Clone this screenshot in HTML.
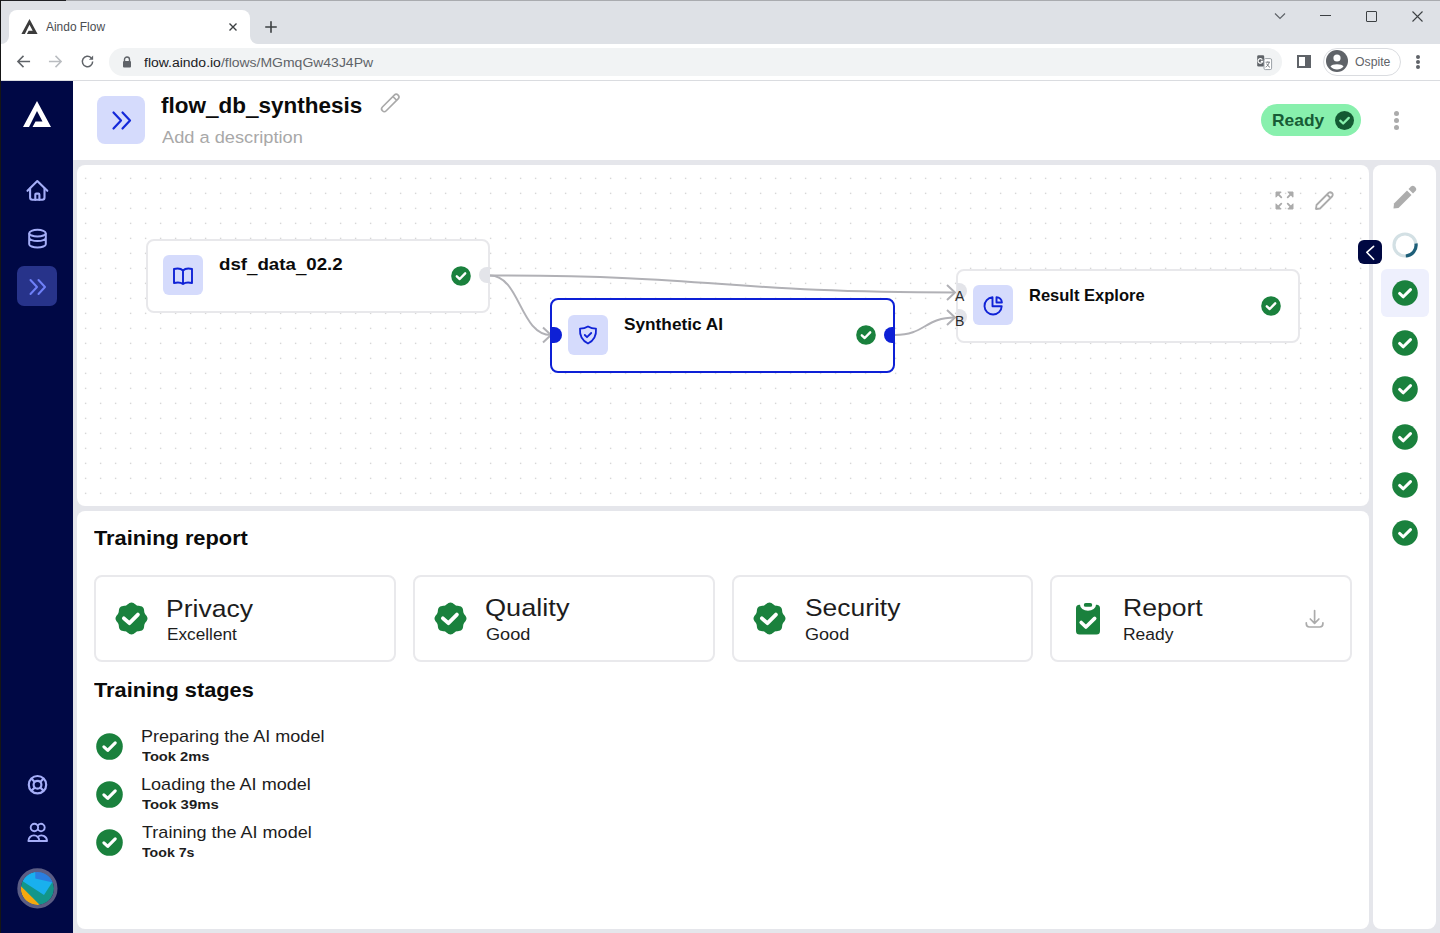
<!DOCTYPE html>
<html><head><meta charset="utf-8">
<style>
*{box-sizing:border-box;margin:0;padding:0}
html,body{width:1440px;height:933px;overflow:hidden;background:#e5e6eb;font-family:"Liberation Sans",sans-serif}
.a{position:absolute}
.t{position:absolute;white-space:nowrap;line-height:1;transform-origin:0 0}
svg{position:absolute;overflow:visible}
.u{display:inline-block;transform-origin:50% 90%;transform:translateY(0.08em) scaleY(2.2)}
</style></head><body>
<!-- browser chrome -->
<div class="a" style="left:0;top:0;width:1440px;height:44px;background:#dee1e6"></div>
<div class="a" style="left:0;top:0;width:66px;height:1px;background:#202124"></div>
<div class="a" style="left:66px;top:0;width:1374px;height:1px;background:#a9abaf"></div>
<div class="a" style="left:0;top:0;width:1px;height:933px;background:#151515"></div>
<!-- tab -->
<div class="a" style="left:9px;top:10px;width:241px;height:40px;background:#fff;border-radius:8px 8px 0 0"></div>
<div class="a" style="left:1px;top:36px;width:8px;height:8px;background:#fff"></div>
<div class="a" style="left:1px;top:28px;width:8px;height:16px;background:#dee1e6;border-bottom-right-radius:8px"></div>
<div class="a" style="left:250px;top:36px;width:8px;height:8px;background:#fff"></div>
<div class="a" style="left:250px;top:28px;width:8px;height:16px;background:#dee1e6;border-bottom-left-radius:8px"></div>
<svg style="left:21px;top:19px" width="17" height="15" viewBox="0 0 28 26"><path d="M0 26 L14 0 L28 26 L9.5 26 L12.5 20.5 L19.5 20.5 L14 10 L6 26 Z" fill="#3c3c3c"/></svg>
<div class="t" id="tabtitle" style="left:45.60px;top:20.50px;font-size:12.65px;color:#4a4d51;transform:scaleX(0.944)">Aindo Flow</div>
<svg style="left:229px;top:23px" width="8" height="8" viewBox="0 0 8 8"><path d="M0.5 0.5L7.5 7.5M7.5 0.5L0.5 7.5" stroke="#3c4043" stroke-width="1.4"/></svg>
<svg style="left:265px;top:20.5px" width="12" height="12" viewBox="0 0 12 12"><path d="M6 0.8V11.2M0.8 6H11.2" stroke="#3c4043" stroke-width="1.6" stroke-linecap="round"/></svg>
<!-- window controls -->
<svg style="left:1274px;top:12px" width="12" height="8" viewBox="0 0 12 8"><path d="M1 1.5L6 6.5L11 1.5" stroke="#5f6368" stroke-width="1.2" fill="none"/></svg>
<div class="a" style="left:1320px;top:15px;width:11px;height:1px;background:#3c4043"></div>
<div class="a" style="left:1366px;top:11px;width:11px;height:11px;border:1px solid #3c4043;border-radius:1px"></div>
<svg style="left:1412px;top:11px" width="11" height="11" viewBox="0 0 11 11"><path d="M0.5 0.5L10.5 10.5M10.5 0.5L0.5 10.5" stroke="#3c4043" stroke-width="1.1"/></svg>
<!-- address row -->
<div class="a" style="left:1px;top:44px;width:1439px;height:36px;background:#fff"></div>
<div class="a" style="left:1px;top:80px;width:1439px;height:1px;background:#dadce0"></div>
<svg style="left:16px;top:54px" width="15" height="15" viewBox="0 0 16 16"><path d="M15 8H2M8 2L2 8L8 14" stroke="#5f6368" stroke-width="1.6" fill="none"/></svg>
<svg style="left:48px;top:54px" width="15" height="15" viewBox="0 0 16 16"><path d="M1 8H14M8 2L14 8L8 14" stroke="#b9bcc0" stroke-width="1.6" fill="none"/></svg>
<svg style="left:80px;top:54px" width="15" height="15" viewBox="0 0 16 16"><path d="M13.5 8A5.5 5.5 0 1 1 11.9 4.1" stroke="#5f6368" stroke-width="1.6" fill="none"/><path d="M14 1.5V6H9.5Z" fill="#5f6368"/></svg>
<div class="a" style="left:109px;top:48px;width:1173px;height:28px;background:#f1f3f4;border-radius:14px"></div>
<svg style="left:122px;top:56px" width="10" height="12" viewBox="0 0 10 12"><path d="M2.5 5V3.5A2.5 2.5 0 0 1 7.5 3.5V5" stroke="#5f6368" stroke-width="1.4" fill="none"/><rect x="1" y="5" width="8" height="6.5" rx="1" fill="#5f6368"/></svg>
<div class="t" id="url" style="left:143.86px;top:56.08px;font-size:13.49px;color:#202124;transform:scaleX(1.036)">flow.aindo.io<span style="color:#5f6368">/flows/MGmqGw43J4Pw</span></div>
<!-- translate icon -->
<svg style="left:1256px;top:54px" width="17" height="17" viewBox="0 0 17 17"><rect x="1.2" y="1.2" width="7" height="11.4" rx="1.3" fill="#5f6368"/><rect x="8" y="4.6" width="7.6" height="11" rx="1.4" fill="#fff" stroke="#9aa0a6" stroke-width="1"/><path d="M6.3 5.6A2.3 2.3 0 1 0 6.6 7.4H4.8" stroke="#fff" stroke-width="1.2" fill="none"/><path d="M9.6 8.2H14M11.8 7.4V8.2M13.2 8.3C12.6 10.5 11.3 12.2 9.6 13.2M10.6 9.6C11.4 11.3 12.5 12.6 14 13.4" stroke="#70757a" stroke-width="0.9" fill="none"/></svg>
<!-- sidebar toggle -->
<div class="a" style="left:1297px;top:55px;width:14px;height:13px;border:2px solid #5f6368;border-right-width:6px"></div>
<!-- profile -->
<div class="a" style="left:1323px;top:48px;width:78px;height:28px;border:1px solid #dadce0;border-radius:14px"></div>
<svg style="left:1326px;top:50px" width="22" height="22" viewBox="0 0 22 22"><circle cx="11" cy="11" r="11" fill="#5f6368"/><circle cx="11" cy="8" r="3.6" fill="#fff"/><path d="M4.5 16.5C6 13.5 16 13.5 17.5 16.5C16 18.5 13.5 19.5 11 19.5C8.5 19.5 6 18.5 4.5 16.5Z" fill="#fff"/></svg>
<div class="t" id="ospite" style="left:1354.79px;top:55.57px;font-size:12.79px;color:#5f6368;transform:scaleX(0.958)">Ospite</div>
<div class="a" style="left:1416px;top:55px;width:4px;height:4px;border-radius:2px;background:#5f6368"></div>
<div class="a" style="left:1416px;top:60px;width:4px;height:4px;border-radius:2px;background:#5f6368"></div>
<div class="a" style="left:1416px;top:65px;width:4px;height:4px;border-radius:2px;background:#5f6368"></div>

<!-- app sidebar -->
<div class="a" style="left:1px;top:81px;width:72px;height:852px;background:#000845"></div>
<svg style="left:23px;top:101px" width="28" height="26" viewBox="0 0 28 26"><path d="M0 26 L14 0 L28 26 L9.5 26 L12.5 20.5 L19.5 20.5 L14 10 L6 26 Z" fill="#fff"/></svg>

<!-- sidebar icons -->
<svg style="left:22px;top:175px" width="30" height="30" viewBox="0 0 30 30"><g stroke="#a5aef8" stroke-width="2.1" fill="none" stroke-linecap="round" stroke-linejoin="round"><path d="M5.5 15.8L15.3 6.1L25.3 15.8"/><path d="M8.1 13.6V22.6Q8.1 24.8 10.3 24.8H20.3Q22.5 24.8 22.5 22.6V13.6"/><path d="M13.3 24.8V19.6Q13.3 18.6 14.3 18.6H16.4Q17.4 18.6 17.4 19.6V24.8"/></g></svg>
<svg style="left:28px;top:228px" width="19" height="21" viewBox="0 0 19 21"><g stroke="#a5aef8" stroke-width="2" fill="none"><ellipse cx="9.5" cy="5.15" rx="8.3" ry="3.3"/><path d="M1.2 5.15V16.2A8.3 3.3 0 0 0 17.8 16.2V5.15M1.2 9.8A8.3 3.3 0 0 0 17.8 9.8"/></g></svg>
<div class="a" style="left:17px;top:266px;width:40px;height:40px;border-radius:7px;background:#27338a"></div>
<svg style="left:29px;top:279px" width="18" height="16" viewBox="0 0 18 16"><path d="M1.5 1L8 8L1.5 15M9.5 1L16 8L9.5 15" stroke="#6f80f8" stroke-width="2" fill="none" stroke-linecap="round" stroke-linejoin="round"/></svg>
<svg style="left:27px;top:774px" width="21" height="21" viewBox="0 0 21 21"><g stroke="#a5aef8" stroke-width="2.2" fill="none"><circle cx="10.5" cy="10.7" r="8.7"/><circle cx="10.5" cy="10.7" r="3.9"/><path d="M7.74 7.94L4.35 4.55M13.26 7.94L16.65 4.55M7.74 13.46L4.35 16.85M13.26 13.46L16.65 16.85"/></g></svg>
<svg style="left:24px;top:818px" width="27" height="27" viewBox="0 0 27 27"><g stroke="#a5aef8" stroke-width="1.9" fill="none" stroke-linejoin="round"><circle cx="10.4" cy="9.5" r="3.7"/><path d="M13.7 7.83A3.7 3.7 0 1 1 13.7 11.17"/><path d="M4.4 23A5.5 5.6 0 0 1 15.4 23Z"/><path d="M13.7 19A5.5 5.5 0 0 1 23 23H15.4"/></g></svg>
<svg style="left:15px;top:866px" width="45" height="45" viewBox="0 0 45 45"><defs><clipPath id="av"><circle cx="22.4" cy="22.4" r="16.6"/></clipPath></defs><g clip-path="url(#av)"><rect width="45" height="45" fill="#12968a"/><path d="M0 0H45V4L29 29L0 10.4Z" fill="#19b0ee"/><path d="M20.3 0V12.6L45 18.2V0Z" fill="#2a7ee0"/><path d="M0 14.4L31 45H0Z" fill="#f5a80e"/><path d="M45 30L33.5 42L45 45Z" fill="#4fa24d"/></g><circle cx="22.4" cy="22.4" r="18.3" stroke="#5b5d84" stroke-width="3.6" fill="none"/></svg>

<!-- header -->
<div class="a" style="left:73px;top:81px;width:1367px;height:79px;background:#fff"></div>
<div class="a" style="left:97px;top:96px;width:48px;height:48px;border-radius:8px;background:#d5dbfc"></div>
<svg style="left:112px;top:111px" width="20" height="19" viewBox="0 0 20 19"><path d="M1.5 1.5L9 9.5L1.5 17.5M10.5 1.5L18 9.5L10.5 17.5" stroke="#1429d9" stroke-width="2.2" fill="none" stroke-linecap="round" stroke-linejoin="round"/></svg>
<div class="t" id="title" style="left:161.45px;top:95.44px;font-size:22.16px;font-weight:bold;color:#0b0b0b;transform:scaleX(1.015)">flow<span class="u">_</span>db<span class="u">_</span>synthesis</div>
<svg style="left:372px;top:88px" width="36" height="30" viewBox="0 0 36 30"><g transform="translate(0.6 -0.6) rotate(-45 17.6 15.6)" stroke="#a9a9a9" stroke-width="1.6" fill="none"><rect x="6.6" y="12.9" width="22.2" height="5.4" rx="2.7"/><path d="M24.1 12.9V18.3"/></g></svg>
<div class="t" id="desc" style="left:162.20px;top:129.11px;font-size:16.30px;color:#a8a8a8;transform:scaleX(1.120)">Add a description</div>
<div class="a" style="left:1261px;top:104px;width:100px;height:32px;border-radius:16px;background:#88f0ad"></div>
<div class="t" id="ready" style="left:1271.78px;top:113.47px;font-size:15.99px;font-weight:bold;color:#175c36;transform:scaleX(1.088)">Ready</div>
<svg style="left:1335px;top:111px" width="19" height="19" viewBox="0 0 20 20"><circle cx="10" cy="10" r="10" fill="#145a33"/><path d="M5.5 10.2L8.6 13.2L14.5 7.2" stroke="#88f0ad" stroke-width="2.4" fill="none" stroke-linecap="round" stroke-linejoin="round"/></svg>
<div class="a" style="left:1394px;top:111px;width:5px;height:5px;border-radius:3px;background:#ababab"></div>
<div class="a" style="left:1394px;top:118px;width:5px;height:5px;border-radius:3px;background:#ababab"></div>
<div class="a" style="left:1394px;top:125px;width:5px;height:5px;border-radius:3px;background:#ababab"></div>

<!-- canvas -->
<div class="a" style="left:77px;top:165px;width:1292px;height:341px;background:#fff;border-radius:8px;background-image:radial-gradient(circle,#c4c4c4 0.6px,transparent 1.05px);background-size:15px 15px;background-position:1.2px 5.8px"></div>
<!-- canvas controls -->
<svg style="left:1275px;top:191px" width="19" height="19" viewBox="0 0 19 19"><g fill="#ababab" stroke="#ababab" stroke-width="1" stroke-linejoin="round"><path d="M1 1H6.2L1 6.2Z"/><path d="M18 1H12.8L18 6.2Z"/><path d="M1 18H6.2L1 12.8Z"/><path d="M18 18H12.8L18 12.8Z"/></g><g stroke="#ababab" stroke-width="1.8" stroke-linecap="round"><path d="M3 3L6.3 6.3M16 3L12.7 6.3M3 16L6.3 12.7M16 16L12.7 12.7"/></g></svg>
<svg style="left:1314px;top:190px" width="21" height="21" viewBox="0 0 21 21"><path d="M2 19L2.5 15L14.5 3C15.5 2 17 2 18 3C19 4 19 5.5 18 6.5L6 18.5Z M13 4.5L16.5 8" stroke="#ababab" stroke-width="1.8" fill="none" stroke-linejoin="round"/></svg>

<!-- edges -->
<svg style="left:0;top:0" width="1440" height="933" viewBox="0 0 1440 933">
<g stroke="#b1b1b6" stroke-width="2" fill="none">
<path d="M490 275.5 C722 275.5 722 292.5 955 292.5"/>
<path d="M490 275.5 C520 275.5 520 335 551 335"/>
<path d="M895 335 C925 335 925 317.5 955 317.5"/>
<path d="M947 285 L955 292.5 L947 300"/>
<path d="M543 327.5 L551 335 L543 342.5"/>
<path d="M947 310 L955 317.5 L947 325"/>
</g></svg>

<!-- node 1 -->
<div class="a" style="left:146px;top:239px;width:344px;height:74px;border:2px solid #e8e8eb;border-radius:8px;background:#fff"></div>
<div class="a" style="left:479px;top:267px;width:11px;height:16px;border-radius:8px 0 0 8px;background:#e3e4e9"></div>
<div class="a" style="left:163px;top:255px;width:40px;height:40px;border-radius:6px;background:#d5dbfc"></div>
<svg style="left:173px;top:267px" width="20" height="18" viewBox="0 0 20 18"><path d="M10 3.5C8 1.5 4.5 1.2 1 2V16C4.5 15.2 8 15.5 10 17C12 15.5 15.5 15.2 19 16V2C15.5 1.2 12 1.5 10 3.5ZM10 3.5V17" stroke="#0f22d6" stroke-width="1.9" fill="none" stroke-linejoin="round"/></svg>
<div class="t" id="n1" style="left:218.85px;top:256.20px;font-size:16.30px;font-weight:bold;color:#0b0b0b;transform:scaleX(1.148)">dsf<span class="u">_</span>data<span class="u">_</span>02.2</div>
<svg style="left:451px;top:265.5px" width="20" height="20" viewBox="0 0 20 20"><circle cx="10" cy="10" r="9.8" fill="#1a813d"/><path d="M5.8 10.3L8.7 13L14.2 7.3" stroke="#fff" stroke-width="2.4" fill="none" stroke-linecap="round" stroke-linejoin="round"/></svg>

<!-- node 2 -->
<div class="a" style="left:550px;top:298px;width:345px;height:75px;border:2px solid #0d20d6;border-radius:8px;background:#fff"></div>
<div class="a" style="left:551px;top:327px;width:11px;height:16px;border-radius:0 8px 8px 0;background:#0d20d6"></div>
<div class="a" style="left:884px;top:327px;width:11px;height:16px;border-radius:8px 0 0 8px;background:#0d20d6"></div>
<div class="a" style="left:568px;top:315px;width:40px;height:40px;border-radius:6px;background:#d5dbfc"></div>
<svg style="left:578px;top:325px" width="20" height="20" viewBox="0 0 20 20"><path d="M10 1.5C12.5 3 15 3.6 18 3.6C18.5 10 16 15.5 10 18.5C4 15.5 1.5 10 2 3.6C5 3.6 7.5 3 10 1.5Z" stroke="#0f22d6" stroke-width="1.8" fill="none" stroke-linejoin="round"/><path d="M6.8 10L9 12.2L13.2 8" stroke="#0f22d6" stroke-width="1.8" fill="none" stroke-linecap="round" stroke-linejoin="round"/></svg>
<div class="t" id="n2" style="left:624.18px;top:316.20px;font-size:16.30px;font-weight:bold;color:#0b0b0b;transform:scaleX(1.059)">Synthetic AI</div>
<svg style="left:856px;top:325px" width="20" height="20" viewBox="0 0 20 20"><circle cx="10" cy="10" r="9.8" fill="#1a813d"/><path d="M5.8 10.3L8.7 13L14.2 7.3" stroke="#fff" stroke-width="2.4" fill="none" stroke-linecap="round" stroke-linejoin="round"/></svg>

<!-- node 3 -->
<div class="a" style="left:956px;top:269px;width:344px;height:74px;border:2px solid #e8e8eb;border-radius:8px;background:#fff"></div>
<div class="a" style="left:957px;top:283px;width:10px;height:16px;border-radius:0 8px 8px 0;background:#e3e4e9"></div>
<div class="a" style="left:957px;top:309px;width:10px;height:16px;border-radius:0 8px 8px 0;background:#e3e4e9"></div>
<div class="t" style="left:955px;top:289px;font-size:14px;color:#2b2b2b">A</div>
<div class="t" style="left:955px;top:314px;font-size:14px;color:#2b2b2b">B</div>
<div class="a" style="left:973px;top:285px;width:40px;height:40px;border-radius:6px;background:#d5dbfc"></div>
<svg style="left:983px;top:295px" width="20" height="20" viewBox="0 0 20 20"><path d="M9.5 2.3A8.6 8.6 0 1 0 18.7 11.2H9.5Z" stroke="#0f22d6" stroke-width="1.9" fill="none" stroke-linejoin="round"/><path d="M13.5 2.2V7.5H18.9A5.6 5.6 0 0 0 13.5 2.2Z" stroke="#0f22d6" stroke-width="1.9" fill="none" stroke-linejoin="round"/></svg>
<div class="t" id="n3" style="left:1028.64px;top:287.20px;font-size:16.30px;font-weight:bold;color:#0b0b0b;transform:scaleX(1.014)">Result Explore</div>
<svg style="left:1260.5px;top:295.5px" width="20" height="20" viewBox="0 0 20 20"><circle cx="10" cy="10" r="9.8" fill="#1a813d"/><path d="M5.8 10.3L8.7 13L14.2 7.3" stroke="#fff" stroke-width="2.4" fill="none" stroke-linecap="round" stroke-linejoin="round"/></svg>

<!-- right panel -->
<div class="a" style="left:1373px;top:165px;width:63px;height:764px;background:#fff;border-radius:8px"></div>
<svg style="left:1393px;top:185px" width="24" height="24" viewBox="0 0 24 24"><path d="M0.5 23.5L1 18.5L14 5.5L18.5 10L5.5 23Z" fill="#adadad"/><path d="M15.5 4L18 1.5C19 0.5 20.5 0.5 21.5 1.5L22.5 2.5C23.5 3.5 23.5 5 22.5 6L20 8.5Z" fill="#adadad"/></svg>
<div class="a" style="left:1358px;top:240px;width:24px;height:24px;border-radius:6px;background:#000842"></div>
<svg style="left:1362px;top:244px" width="16" height="18" viewBox="0 0 16 18"><path d="M11.6 2.3L4.8 8.3L11.6 15.3" stroke="#fff" stroke-width="1.6" fill="none" stroke-linecap="round" stroke-linejoin="round"/></svg>
<svg style="left:1392px;top:232px" width="26" height="26" viewBox="0 0 26 26"><circle cx="13" cy="13" r="11" stroke="#d3e0e4" stroke-width="3.2" fill="none"/><path d="M24 11.5A11 11 0 0 1 13.8 24" stroke="#1e5f79" stroke-width="3.2" fill="none"/></svg>
<div class="a" style="left:1381px;top:269px;width:48px;height:48px;border-radius:6px;background:#eef0fd"></div>
<svg style="left:1392px;top:280px" width="26" height="26" viewBox="0 0 26 26"><circle cx="13" cy="13" r="12.8" fill="#1a813d"/><path d="M7.6 13.4L11.3 16.8L18.5 9.6" stroke="#fff" stroke-width="3" fill="none" stroke-linecap="round" stroke-linejoin="round"/></svg>
<svg style="left:1392px;top:330px" width="26" height="26" viewBox="0 0 26 26"><circle cx="13" cy="13" r="12.8" fill="#1a813d"/><path d="M7.6 13.4L11.3 16.8L18.5 9.6" stroke="#fff" stroke-width="3" fill="none" stroke-linecap="round" stroke-linejoin="round"/></svg>
<svg style="left:1392px;top:376px" width="26" height="26" viewBox="0 0 26 26"><circle cx="13" cy="13" r="12.8" fill="#1a813d"/><path d="M7.6 13.4L11.3 16.8L18.5 9.6" stroke="#fff" stroke-width="3" fill="none" stroke-linecap="round" stroke-linejoin="round"/></svg>
<svg style="left:1392px;top:424px" width="26" height="26" viewBox="0 0 26 26"><circle cx="13" cy="13" r="12.8" fill="#1a813d"/><path d="M7.6 13.4L11.3 16.8L18.5 9.6" stroke="#fff" stroke-width="3" fill="none" stroke-linecap="round" stroke-linejoin="round"/></svg>
<svg style="left:1392px;top:472px" width="26" height="26" viewBox="0 0 26 26"><circle cx="13" cy="13" r="12.8" fill="#1a813d"/><path d="M7.6 13.4L11.3 16.8L18.5 9.6" stroke="#fff" stroke-width="3" fill="none" stroke-linecap="round" stroke-linejoin="round"/></svg>
<svg style="left:1392px;top:520px" width="26" height="26" viewBox="0 0 26 26"><circle cx="13" cy="13" r="12.8" fill="#1a813d"/><path d="M7.6 13.4L11.3 16.8L18.5 9.6" stroke="#fff" stroke-width="3" fill="none" stroke-linecap="round" stroke-linejoin="round"/></svg>

<!-- report card -->
<div class="a" style="left:77px;top:511px;width:1292px;height:418px;background:#fff;border-radius:8px"></div>
<div class="t" id="tr" style="left:93.68px;top:528.06px;font-size:20.60px;font-weight:bold;color:#0b0b0b;transform:scaleX(1.059)">Training report</div>

<div class="a" style="left:94px;top:575px;width:301.75px;height:87px;border:2px solid #e9e9ec;border-radius:8px"></div>
<div class="a" style="left:412.75px;top:575px;width:301.75px;height:87px;border:2px solid #e9e9ec;border-radius:8px"></div>
<div class="a" style="left:731.5px;top:575px;width:301.75px;height:87px;border:2px solid #e9e9ec;border-radius:8px"></div>
<div class="a" style="left:1050.25px;top:575px;width:301.75px;height:87px;border:2px solid #e9e9ec;border-radius:8px"></div>

<svg id="badge" style="left:115px;top:602px" width="33" height="33" viewBox="0 0 33 33"><path d="M32.50 16.50 L32.35 17.54 L31.92 18.53 L31.31 19.45 L30.65 20.29 L30.06 21.10 L29.62 21.93 L29.34 22.83 L29.19 23.82 L29.06 24.89 L28.84 25.97 L28.44 26.97 L27.81 27.81 L26.97 28.44 L25.97 28.84 L24.89 29.06 L23.83 29.19 L22.83 29.34 L21.93 29.62 L21.10 30.06 L20.29 30.65 L19.45 31.31 L18.53 31.92 L17.54 32.35 L16.50 32.50 L15.46 32.35 L14.47 31.92 L13.55 31.31 L12.71 30.65 L11.90 30.06 L11.07 29.62 L10.17 29.34 L9.18 29.19 L8.11 29.06 L7.03 28.84 L6.03 28.44 L5.19 27.81 L4.56 26.97 L4.16 25.97 L3.94 24.89 L3.81 23.82 L3.66 22.83 L3.38 21.93 L2.94 21.10 L2.35 20.29 L1.69 19.45 L1.08 18.53 L0.65 17.54 L0.50 16.50 L0.65 15.46 L1.08 14.47 L1.69 13.55 L2.35 12.71 L2.94 11.90 L3.38 11.07 L3.66 10.17 L3.81 9.18 L3.94 8.11 L4.16 7.03 L4.56 6.03 L5.19 5.19 L6.03 4.56 L7.03 4.16 L8.11 3.94 L9.17 3.81 L10.17 3.66 L11.07 3.38 L11.90 2.94 L12.71 2.35 L13.55 1.69 L14.47 1.08 L15.46 0.65 L16.50 0.50 L17.54 0.65 L18.53 1.08 L19.45 1.69 L20.29 2.35 L21.10 2.94 L21.93 3.38 L22.83 3.66 L23.83 3.81 L24.89 3.94 L25.97 4.16 L26.97 4.56 L27.81 5.19 L28.44 6.03 L28.84 7.03 L29.06 8.11 L29.19 9.17 L29.34 10.17 L29.62 11.07 L30.06 11.90 L30.65 12.71 L31.31 13.55 L31.92 14.47 L32.35 15.46Z" fill="#1a813d"/><path d="M8.9 16.3L14.4 21.2L22.9 12.6" stroke="#fff" stroke-width="3.8" fill="none" stroke-linecap="round" stroke-linejoin="round"/></svg>
<svg style="left:434px;top:602px" width="33" height="33" viewBox="0 0 33 33"><path d="M32.50 16.50 L32.35 17.54 L31.92 18.53 L31.31 19.45 L30.65 20.29 L30.06 21.10 L29.62 21.93 L29.34 22.83 L29.19 23.82 L29.06 24.89 L28.84 25.97 L28.44 26.97 L27.81 27.81 L26.97 28.44 L25.97 28.84 L24.89 29.06 L23.83 29.19 L22.83 29.34 L21.93 29.62 L21.10 30.06 L20.29 30.65 L19.45 31.31 L18.53 31.92 L17.54 32.35 L16.50 32.50 L15.46 32.35 L14.47 31.92 L13.55 31.31 L12.71 30.65 L11.90 30.06 L11.07 29.62 L10.17 29.34 L9.18 29.19 L8.11 29.06 L7.03 28.84 L6.03 28.44 L5.19 27.81 L4.56 26.97 L4.16 25.97 L3.94 24.89 L3.81 23.82 L3.66 22.83 L3.38 21.93 L2.94 21.10 L2.35 20.29 L1.69 19.45 L1.08 18.53 L0.65 17.54 L0.50 16.50 L0.65 15.46 L1.08 14.47 L1.69 13.55 L2.35 12.71 L2.94 11.90 L3.38 11.07 L3.66 10.17 L3.81 9.18 L3.94 8.11 L4.16 7.03 L4.56 6.03 L5.19 5.19 L6.03 4.56 L7.03 4.16 L8.11 3.94 L9.17 3.81 L10.17 3.66 L11.07 3.38 L11.90 2.94 L12.71 2.35 L13.55 1.69 L14.47 1.08 L15.46 0.65 L16.50 0.50 L17.54 0.65 L18.53 1.08 L19.45 1.69 L20.29 2.35 L21.10 2.94 L21.93 3.38 L22.83 3.66 L23.83 3.81 L24.89 3.94 L25.97 4.16 L26.97 4.56 L27.81 5.19 L28.44 6.03 L28.84 7.03 L29.06 8.11 L29.19 9.17 L29.34 10.17 L29.62 11.07 L30.06 11.90 L30.65 12.71 L31.31 13.55 L31.92 14.47 L32.35 15.46Z" fill="#1a813d"/><path d="M8.9 16.3L14.4 21.2L22.9 12.6" stroke="#fff" stroke-width="3.8" fill="none" stroke-linecap="round" stroke-linejoin="round"/></svg>
<svg style="left:753px;top:602px" width="33" height="33" viewBox="0 0 33 33"><path d="M32.50 16.50 L32.35 17.54 L31.92 18.53 L31.31 19.45 L30.65 20.29 L30.06 21.10 L29.62 21.93 L29.34 22.83 L29.19 23.82 L29.06 24.89 L28.84 25.97 L28.44 26.97 L27.81 27.81 L26.97 28.44 L25.97 28.84 L24.89 29.06 L23.83 29.19 L22.83 29.34 L21.93 29.62 L21.10 30.06 L20.29 30.65 L19.45 31.31 L18.53 31.92 L17.54 32.35 L16.50 32.50 L15.46 32.35 L14.47 31.92 L13.55 31.31 L12.71 30.65 L11.90 30.06 L11.07 29.62 L10.17 29.34 L9.18 29.19 L8.11 29.06 L7.03 28.84 L6.03 28.44 L5.19 27.81 L4.56 26.97 L4.16 25.97 L3.94 24.89 L3.81 23.82 L3.66 22.83 L3.38 21.93 L2.94 21.10 L2.35 20.29 L1.69 19.45 L1.08 18.53 L0.65 17.54 L0.50 16.50 L0.65 15.46 L1.08 14.47 L1.69 13.55 L2.35 12.71 L2.94 11.90 L3.38 11.07 L3.66 10.17 L3.81 9.18 L3.94 8.11 L4.16 7.03 L4.56 6.03 L5.19 5.19 L6.03 4.56 L7.03 4.16 L8.11 3.94 L9.17 3.81 L10.17 3.66 L11.07 3.38 L11.90 2.94 L12.71 2.35 L13.55 1.69 L14.47 1.08 L15.46 0.65 L16.50 0.50 L17.54 0.65 L18.53 1.08 L19.45 1.69 L20.29 2.35 L21.10 2.94 L21.93 3.38 L22.83 3.66 L23.83 3.81 L24.89 3.94 L25.97 4.16 L26.97 4.56 L27.81 5.19 L28.44 6.03 L28.84 7.03 L29.06 8.11 L29.19 9.17 L29.34 10.17 L29.62 11.07 L30.06 11.90 L30.65 12.71 L31.31 13.55 L31.92 14.47 L32.35 15.46Z" fill="#1a813d"/><path d="M8.9 16.3L14.4 21.2L22.9 12.6" stroke="#fff" stroke-width="3.8" fill="none" stroke-linecap="round" stroke-linejoin="round"/></svg>
<svg style="left:1075px;top:602px" width="26" height="34" viewBox="0 0 26 34"><path d="M1 6.3Q1 2.8 4.5 2.8H5A8 6 0 0 0 21 2.8H21.5Q25 2.8 25 6.3V29Q25 32.5 21.5 32.5H4.5Q1 32.5 1 29Z" fill="#1a813d"/><rect x="8.8" y="1" width="8.4" height="3.8" rx="1.9" fill="#1a813d"/><path d="M6.2 20.5L10.9 25L19.7 16.4" stroke="#fff" stroke-width="3.6" fill="none" stroke-linecap="round" stroke-linejoin="round"/></svg>
<svg style="left:1305px;top:609px" width="19" height="19" viewBox="0 0 19 19"><path d="M9.6 1.5V14M5.3 10L9.6 14.3L13.9 10M1.3 13.8V14.8Q1.3 18 4.5 18H14.7Q17.9 18 17.9 14.8V13.8" stroke="#ababab" stroke-width="1.7" fill="none" stroke-linecap="round" stroke-linejoin="round"/></svg>

<div class="t" id="m1" style="left:166.18px;top:596.55px;font-size:24.40px;color:#1d1d1d;transform:scaleX(1.088)">Privacy</div>
<div class="t" id="m1b" style="left:166.62px;top:626.63px;font-size:15.80px;color:#1d1d1d;transform:scaleX(1.090)">Excellent</div>
<div class="t" id="m2" style="left:485.44px;top:595.75px;font-size:24.40px;color:#1d1d1d;transform:scaleX(1.113)">Quality</div>
<div class="t" id="m2b" style="left:485.89px;top:627.03px;font-size:15.80px;color:#1d1d1d;transform:scaleX(1.149)">Good</div>
<div class="t" id="m3" style="left:804.58px;top:595.75px;font-size:24.40px;color:#1d1d1d;transform:scaleX(1.083)">Security</div>
<div class="t" id="m3b" style="left:805.00px;top:627.03px;font-size:15.80px;color:#1d1d1d;transform:scaleX(1.144)">Good</div>
<div class="t" id="m4" style="left:1122.57px;top:595.75px;font-size:24.40px;color:#1d1d1d;transform:scaleX(1.089)">Report</div>
<div class="t" id="m4b" style="left:1123.30px;top:627.03px;font-size:15.80px;color:#1d1d1d;transform:scaleX(1.106)">Ready</div>

<div class="t" id="ts" style="left:94.08px;top:680.06px;font-size:20.60px;font-weight:bold;color:#0b0b0b;transform:scaleX(1.058)">Training stages</div>

<svg style="left:96px;top:733px" width="27" height="27" viewBox="0 0 26 26"><circle cx="13" cy="13" r="12.8" fill="#1a813d"/><path d="M7.6 13.4L11.3 16.8L18.5 9.6" stroke="#fff" stroke-width="3" fill="none" stroke-linecap="round" stroke-linejoin="round"/></svg>
<svg style="left:96px;top:781px" width="27" height="27" viewBox="0 0 26 26"><circle cx="13" cy="13" r="12.8" fill="#1a813d"/><path d="M7.6 13.4L11.3 16.8L18.5 9.6" stroke="#fff" stroke-width="3" fill="none" stroke-linecap="round" stroke-linejoin="round"/></svg>
<svg style="left:96px;top:829px" width="27" height="27" viewBox="0 0 26 26"><circle cx="13" cy="13" r="12.8" fill="#1a813d"/><path d="M7.6 13.4L11.3 16.8L18.5 9.6" stroke="#fff" stroke-width="3" fill="none" stroke-linecap="round" stroke-linejoin="round"/></svg>

<div class="t" id="s1" style="left:140.86px;top:728.12px;font-size:16.40px;color:#1d1d1d;transform:scaleX(1.100)">Preparing the AI model</div>
<div class="t" id="s1b" style="left:142.15px;top:749.50px;font-size:13.70px;font-weight:bold;color:#1d1d1d;transform:scaleX(1.074)">Took 2ms</div>
<div class="t" id="s2" style="left:140.85px;top:776.12px;font-size:16.40px;color:#1d1d1d;transform:scaleX(1.103)">Loading the AI model</div>
<div class="t" id="s2b" style="left:142.15px;top:798.40px;font-size:13.70px;font-weight:bold;color:#1d1d1d;transform:scaleX(1.088)">Took 39ms</div>
<div class="t" id="s3" style="left:141.94px;top:824.12px;font-size:16.40px;color:#1d1d1d;transform:scaleX(1.100)">Training the AI model</div>
<div class="t" id="s3b" style="left:142.16px;top:846.40px;font-size:13.70px;font-weight:bold;color:#1d1d1d;transform:scaleX(1.034)">Took 7s</div>

</body></html>
